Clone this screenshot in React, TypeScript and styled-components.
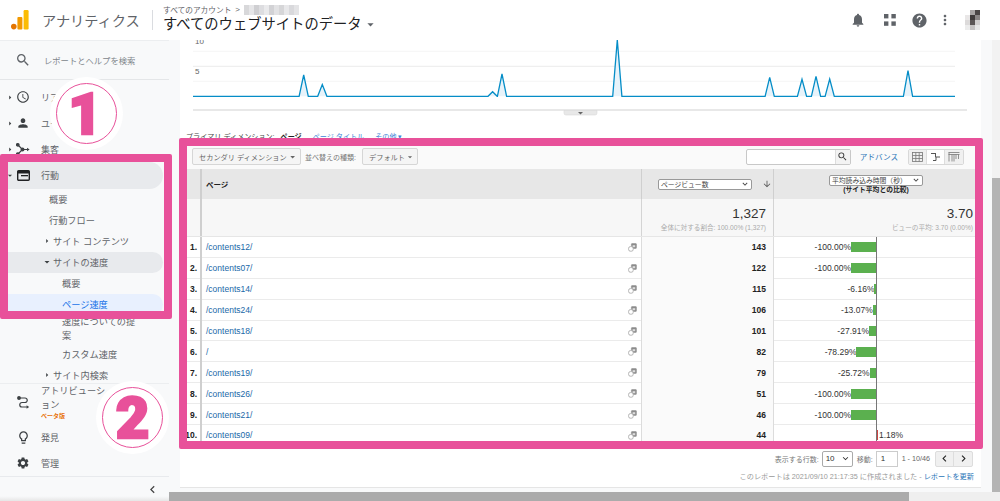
import React from 'react'
import styled, { createGlobalStyle } from 'styled-components'
import {
  MdSearch, MdAccessTime, MdPerson, MdLightbulbOutline, MdSettings, MdChevronLeft, MdChevronRight,
  MdNotifications, MdHelp, MdMoreVert, MdArrowDropDown, MdArrowRight, MdArrowDownward, MdKeyboardArrowDown,
} from 'react-icons/md'

const PINK = '#e8519a'
const BASE = 96.3

const peaks: [number, number][] = [
  [303.7, 75], [322.3, 84.6], [492.6, 91.7], [502, 74], [617.3, 40],
  [769.7, 77.3], [802, 79.3], [816, 76.3], [829.7, 79], [908, 70.7],
]

const rows = [
  { no: 1, page: '/contents12/', views: 143, diff: -100 },
  { no: 2, page: '/contents07/', views: 122, diff: -100 },
  { no: 3, page: '/contents14/', views: 115, diff: -6.16 },
  { no: 4, page: '/contents24/', views: 106, diff: -13.07 },
  { no: 5, page: '/contents18/', views: 101, diff: -27.91 },
  { no: 6, page: '/', views: 82, diff: -78.29 },
  { no: 7, page: '/contents19/', views: 79, diff: -25.72 },
  { no: 8, page: '/contents26/', views: 51, diff: -100 },
  { no: 9, page: '/contents21/', views: 46, diff: -100 },
  { no: 10, page: '/contents09/', views: 44, diff: 1.18 },
]

const Logo = () => (
  <svg width="18" height="20" viewBox="0 0 18 20">
    <circle cx="2.8" cy="16.6" r="2.8" fill="#e37400" />
    <rect x="6.4" y="7" width="5" height="12.4" rx="1" fill="#f29900" />
    <rect x="12.6" y="0" width="5" height="19.4" rx="1.2" fill="#fbbc04" />
  </svg>
)

const BlurredName = () => {
  const shades = ['#d8d8da', '#e6e6e8', '#cfcfd2', '#dddde0', '#eaeaec', '#d2d2d5', '#e2e2e4', '#d6d6d8', '#e8e8ea', '#d9d9dc', '#e4e4e6']
  return (
    <svg width="55" height="10" viewBox="0 0 55 10">
      {shades.map((c, i) => <rect key={i} x={i * 5} y="0" width="5" height="10" fill={c} />)}
    </svg>
  )
}

const Avatar = () => {
  const cells = [
    ['#ffffff', '#a8a4a4', '#4a4545'],
    ['#e9e7e7', '#3f3a3a', '#8a8585'],
    ['#dcdada', '#5a5555', '#d0cece'],
    ['#ececec', '#c4c2c2', '#e6e6e6'],
  ]
  return (
    <svg width="15" height="20" viewBox="0 0 15 20">
      {cells.map((r, y) => r.map((c, x) => <rect key={`${x}-${y}`} x={x * 5} y={y * 5} width="5" height="5" fill={c} />))}
    </svg>
  )
}

const AppsIcon = () => (
  <svg width="12" height="12" viewBox="0 0 12 12" fill="#5f6368">
    <rect x="0" y="0" width="4.4" height="4.4" /><rect x="7.4" y="0" width="4.4" height="4.4" />
    <rect x="0" y="7.4" width="4.4" height="4.4" /><rect x="7.4" y="7.4" width="4.4" height="4.4" />
  </svg>
)

const AcquisitionIcon = () => (
  <svg width="15" height="15" viewBox="0 0 15 15" fill="none" stroke="#3c4043" strokeWidth="1.2">
    <path d="M2 3 L6.5 7.5 L2 12 M6.5 7.5 H11" />
    <circle cx="1.8" cy="2.8" r="1.3" fill="#3c4043" />
    <circle cx="1.8" cy="12.2" r="1.3" fill="#3c4043" />
    <circle cx="6.5" cy="7.5" r="1.4" fill="#3c4043" />
    <path d="M11 5.8 L13.6 7.5 L11 9.2 Z" fill="#3c4043" stroke="none" />
  </svg>
)

const BehaviorIcon = () => (
  <svg width="13" height="11" viewBox="0 0 13 11">
    <rect x="0.7" y="0.7" width="11.6" height="9.6" rx="1" fill="none" stroke="#202124" strokeWidth="1.4" />
    <rect x="0.7" y="0.7" width="11.6" height="2.8" fill="#202124" />
    <rect x="4" y="5" width="7" height="1.3" fill="#202124" />
  </svg>
)

const AttributionIcon = () => (
  <svg width="13" height="13" viewBox="0 0 13 13" fill="none" stroke="#3c4043" strokeWidth="1.2">
    <circle cx="2" cy="2" r="1.3" fill="#3c4043" />
    <path d="M3 2 H8 a2 2 0 0 1 0 4.5 H5 a2 2 0 0 0 0 4.5 H10" />
    <path d="M9.6 9.2 L12.2 11 L9.6 12.8 Z" fill="#3c4043" stroke="none" />
  </svg>
)

const PopoutIcon = () => (
  <svg width="9" height="9" viewBox="0 0 9 9">
    <rect x="3.4" y="0.6" width="5" height="4.8" rx="0.6" fill="#8c8c8c" stroke="#999" strokeWidth="0.7" />
    <rect x="4.6" y="2.2" width="2.6" height="2" fill="#ddd" />
    <rect x="0.6" y="3.6" width="4.6" height="4.6" rx="1.8" fill="#fff" stroke="#aaa" strokeWidth="0.9" />
  </svg>
)

const TableViewIcon = () => (
  <svg width="11" height="10" viewBox="0 0 11 10" fill="none" stroke="#777" strokeWidth="0.8">
    <rect x="0.5" y="0.5" width="10" height="9" /><path d="M0.5 3.5H10.5M0.5 6.500H10.5M3.8 .5V9.5M7.2 .5V9.5" />
  </svg>
)

const CompareViewIcon = () => (
  <svg width="11" height="10" viewBox="0 0 11 10" fill="none" stroke="#555" strokeWidth="1">
    <path d="M1 1.5H6M5.5 1.5V5H10M3 8.5H6V5" />
  </svg>
)

const PivotViewIcon = () => (
  <svg width="12" height="10" viewBox="0 0 12 10" fill="none" stroke="#777" strokeWidth="0.8">
    <path d="M0.5 0.5H11.5M0.5 2.5H11.5M1 0.5V9.5M4 2.5V9.5M6 2.5V9.5M8 2.5V7M10.5 2.5V7" />
  </svg>
)

const TrafficChart = () => {
  const pts = [`193,${BASE}`]
  peaks.forEach(([x, y]) => pts.push(`${x - 4.6},${BASE}`, `${x},${y}`, `${x + 4.6},${BASE}`))
  pts.push(`955,${BASE}`)
  return (
    <svg width="801" height="85" viewBox="180 40 801 85">
      <path d="M193 51.3H955" stroke="#f5f5f5" />
      <path d="M193 66.3H955" stroke="#ececec" />
      <path d="M193 81.3H955" stroke="#f5f5f5" />
      <path d="M193 110H967" stroke="#e0e0e0" strokeWidth="1.4" />
      {peaks.map(([x, y]) => (
        <path key={x} d={`M${x - 4.6} ${BASE}L${x} ${y}L${x + 4.6} ${BASE}Z`} fill="#e8f3fa" />
      ))}
      <polyline points={pts.join(' ')} fill="none" stroke="#058dc7" strokeWidth="1.3" />
      <text x="195" y="44" fontSize="8" fill="#666" fontFamily="Liberation Sans">10</text>
      <text x="195" y="74" fontSize="8" fill="#666" fontFamily="Liberation Sans">5</text>
      <path d="M564 110.5H597V113a2 2 0 0 1 -2 2H566a2 2 0 0 1 -2 -2Z" fill="#e8e8e8" stroke="#d8d8d8" strokeWidth="0.6" />
      <path d="M578 112H583L580.500 114.500Z" fill="#666" />
    </svg>
  )
}

const App = () => {
  return (
    <Page>
      <GlobalStyle />
      <Header>
        <LogoBox><Logo /></LogoBox>
        <Product>アナリティクス</Product>
        <HeaderDivider />
        <Account>
          <Crumb>すべてのアカウント <CrumbArrow>&gt;</CrumbArrow> <BlurredName /></Crumb>
          <Property>すべてのウェブサイトのデータ<MdArrowDropDown size={15} color="#5f6368" /></Property>
        </Account>
        <HeaderIcons>
          <MdNotifications size={16} color="#5f6368" />
          <AppsIcon />
          <MdHelp size={17} color="#5f6368" />
          <MdMoreVert size={16} color="#5f6368" />
          <Avatar />
        </HeaderIcons>
      </Header>
      <Body>
        <Sidebar>
          <SearchRow>
            <MdSearch size={16} color="#5f6368" />
            <SearchHint>レポートとヘルプを検索</SearchHint>
          </SearchRow>
          <Nav>
            <NavItem $height={26} $top={4}>
              <Caret><MdArrowRight size={11} /></Caret>
              <NavIcon><MdAccessTime size={14} /></NavIcon>
              <NavLabel>リアルタイム</NavLabel>
            </NavItem>
            <NavItem $height={26}>
              <Caret><MdArrowRight size={11} /></Caret>
              <NavIcon><MdPerson size={14} /></NavIcon>
              <NavLabel>ユーザー</NavLabel>
            </NavItem>
            <NavItem $height={26}>
              <Caret><MdArrowRight size={11} /></Caret>
              <NavIcon><AcquisitionIcon /></NavIcon>
              <NavLabel>集客</NavLabel>
            </NavItem>
            <NavItem $height={27} $tone="open">
              <Caret><MdArrowDropDown size={13} /></Caret>
              <NavIcon><BehaviorIcon /></NavIcon>
              <NavLabel>行動</NavLabel>
            </NavItem>
            <SubItem $indent={49}>概要</SubItem>
            <SubItem $indent={49}>行動フロー</SubItem>
            <SubItem $indent={40}><Caret><MdArrowRight size={10} /></Caret>サイト コンテンツ</SubItem>
            <SubItem $indent={40} $tone="open"><Caret><MdArrowDropDown size={12} /></Caret>サイトの速度</SubItem>
            <SubItem $indent={62}>概要</SubItem>
            <SubItem $indent={62} $tone="active">ページ速度</SubItem>
            <WrappedItem>速度についての提案</WrappedItem>
            <SubItem $indent={62}>カスタム速度</SubItem>
            <SubItem $indent={40}><Caret><MdArrowRight size={10} /></Caret>サイト内検索</SubItem>
          </Nav>
          <SidebarBottom>
            <AttributionRow>
              <NavIcon><AttributionIcon /></NavIcon>
              <AttributionText>
                アトリビューション
                <Beta>ベータ版</Beta>
              </AttributionText>
            </AttributionRow>
            <NavItem $height={26} $top={3}>
              <Caret />
              <NavIcon><MdLightbulbOutline size={15} /></NavIcon>
              <NavLabel>発見</NavLabel>
            </NavItem>
            <NavItem $height={26}>
              <Caret />
              <NavIcon><MdSettings size={14} /></NavIcon>
              <NavLabel>管理</NavLabel>
            </NavItem>
            <CollapseRow><MdChevronLeft size={15} color="#444" /></CollapseRow>
          </SidebarBottom>
        </Sidebar>
        <Content>
          <Workspace>
            <Gutter>
              <Card>
                <TrafficChart />
                <PrimaryRow>
                  <span>プライマリ ディメンション:</span>
                  <strong>ページ</strong>
                  <DimLink>ページ タイトル</DimLink>
                  <DimLink>その他 ▾</DimLink>
                </PrimaryRow>
                <Table>
                  <Toolbar>
                    <ToolButton $width={109}>セカンダリ ディメンション<MdArrowDropDown size={12} /></ToolButton>
                    <ToolLabel>並べ替えの種類:</ToolLabel>
                    <ToolButton $width={56}>デフォルト<MdArrowDropDown size={12} /></ToolButton>
                    <ToolSpacer />
                    <FilterBox>
                      <FilterInput />
                      <FilterButton><MdSearch size={11} color="#333" /></FilterButton>
                    </FilterBox>
                    <AdvancedLink>アドバンス</AdvancedLink>
                    <ViewToggles>
                      <ViewToggle><TableViewIcon /></ViewToggle>
                      <ViewToggle $on><CompareViewIcon /></ViewToggle>
                      <ViewToggle><PivotViewIcon /></ViewToggle>
                    </ViewToggles>
                  </Toolbar>
                  <HeaderRow>
                    <HeaderCell $rule />
                    <HeaderCell $rule $grey><PageTitle>ページ</PageTitle></HeaderCell>
                    <HeaderCell $rule $center>
                      <MiniSelect $width={94}>ページビュー数<MdKeyboardArrowDown size={10} /></MiniSelect>
                      <SortArrow><MdArrowDownward size={10} color="#555" /></SortArrow>
                    </HeaderCell>
                    <CompareHead>
                      <MiniSelect $width={94}>平均読み込み時間（秒）<MdKeyboardArrowDown size={10} /></MiniSelect>
                      <CompareNote>(サイト平均との比較)</CompareNote>
                    </CompareHead>
                  </HeaderRow>
                  <SummaryRow>
                    <SummaryCell $rule />
                    <SummaryCell $rule />
                    <SummaryCell $rule>
                      <BigNum>1,327</BigNum>
                      <SubNum>全体に対する割合: 100.00% (1,327)</SubNum>
                    </SummaryCell>
                    <SummaryCell>
                      <BigNum>3.70</BigNum>
                      <SubNum>ビューの平均: 3.70 (0.00%)</SubNum>
                    </SummaryCell>
                  </SummaryRow>
                  {rows.map((r) => (
                    <Row key={r.no}>
                      <RowNo>{r.no}.</RowNo>
                      <RowPage>
                        <PageLink>{r.page}</PageLink>
                        <PopoutIcon />
                      </RowPage>
                      <RowViews>{r.views}</RowViews>
                      <RowCompare>
                        <NegativeSide>
                          {r.diff < 0 && <>{r.diff.toFixed(2)}%<Bar style={{ width: Math.abs(r.diff) * 0.25 }} /></>}
                        </NegativeSide>
                        <PositiveSide>
                          {r.diff > 0 && <><RedBar />{r.diff.toFixed(2)}%</>}
                        </PositiveSide>
                      </RowCompare>
                    </Row>
                  ))}
                </Table>
                <Pager>
                  <PagerText>表示する行数:</PagerText>
                  <PagerSelect>10<MdKeyboardArrowDown size={11} /></PagerSelect>
                  <PagerText>移動:</PagerText>
                  <PagerInput>1</PagerInput>
                  <PagerRange>1 - 10/46</PagerRange>
                  <PagerButtons>
                    <PagerButton><MdChevronLeft size={13} /></PagerButton>
                    <PagerButton><MdChevronRight size={13} /></PagerButton>
                  </PagerButtons>
                </Pager>
                <ReportNote>
                  このレポートは 2021/09/10 21:17:35 に作成されました - <ReportLink>レポートを更新</ReportLink>
                </ReportNote>
              </Card>
            </Gutter>
            <VScroll><VThumb /></VScroll>
          </Workspace>
          <HScroll><HThumb /></HScroll>
        </Content>
      </Body>

      <PinkFrame $x={0} $y={154} $w={172} $h={165} />
      <PinkFrame $x={179} $y={138} $w={804} $h={311} />
      <Badge $x={50} $y={77}><Ring><Digit $shift={-3}>1</Digit></Ring></Badge>
      <Badge $x={96} $y={381}><Ring><Digit>2</Digit></Ring></Badge>
    </Page>
  )
}

export default App

const GlobalStyle = createGlobalStyle`
html, body {
  margin: 0;
  padding: 0;
  overflow: hidden;
  background: #fff;
}
* {
  box-sizing: border-box;
}
`

const Page = styled.div`
position: relative;
width: 1000px;
height: 501px;
overflow: hidden;
display: flex;
flex-direction: column;
font-family: "Liberation Sans", "Noto Sans CJK JP", sans-serif;
color: #333;
background: #f8f9fa;
`

const Header = styled.header`
height: 40px;
flex: none;
display: flex;
align-items: center;
background: #fff;
padding-left: 11px;
`

const LogoBox = styled.div`
width: 31px;
height: 20px;
margin-top: -1px;
`

const Product = styled.div`
font-size: 14.2px;
color: #5f6368;
width: 110px;
white-space: nowrap;
`

const HeaderDivider = styled.div`
width: 1px;
height: 20px;
background: #dadce0;
margin-right: 10px;
`

const Account = styled.div`
display: flex;
flex-direction: column;
padding-bottom: 3px;
`

const Crumb = styled.div`
display: flex;
align-items: center;
gap: 4px;
height: 11px;
font-size: 7.7px;
color: #5f6368;
white-space: nowrap;
`

const CrumbArrow = styled.span`
font-size: 8px;
`

const Property = styled.div`
display: flex;
align-items: center;
gap: 1px;
font-size: 14.3px;
line-height: 18px;
color: #202124;
white-space: nowrap;
`

const HeaderIcons = styled.div`
margin-left: auto;
display: flex;
align-items: center;
padding-right: 20px;
& > svg:nth-child(1) { margin-right: 18px; }
& > svg:nth-child(2) { margin-right: 14.5px; }
& > svg:nth-child(3) { margin-right: 9.5px; }
& > svg:nth-child(4) { margin-right: 12px; }
`

const Body = styled.div`
flex: 1;
display: flex;
min-height: 0;
`

const Sidebar = styled.aside`
width: 169px;
flex: none;
display: flex;
flex-direction: column;
background: #f8f9fa;
border-top: 1px solid #eceef0;
`

const SearchRow = styled.div`
height: 39px;
flex: none;
display: flex;
align-items: center;
gap: 13px;
padding-left: 15px;
border-bottom: 1px solid #e4e6e8;
`

const SearchHint = styled.span`
font-size: 8.3px;
color: #80868b;
white-space: nowrap;
`

const Nav = styled.nav`
height: 303px;
flex: none;
overflow: hidden;
`

const NavItem = styled.div<{ $height: number; $top?: number; $tone?: string }>`
display: flex;
align-items: center;
height: ${(p) => p.$height}px;
margin-top: ${(p) => p.$top || 0}px;
padding-left: 5px;
width: 163px;
font-size: 9px;
color: #5f6368;
background: ${(p) => (p.$tone === 'open' ? '#e8eaed' : 'transparent')};
border-radius: 0 14px 14px 0;
`

const Caret = styled.span`
width: 10px;
flex: none;
display: inline-flex;
justify-content: center;
color: #3c4043;
`

const NavIcon = styled.span`
width: 16px;
flex: none;
display: inline-flex;
justify-content: center;
color: #3c4043;
`

const NavLabel = styled.span`
margin-left: 10px;
white-space: nowrap;
`

const SubItem = styled.div<{ $indent: number; $tone?: string }>`
display: flex;
align-items: center;
height: 21px;
width: 163px;
padding-left: ${(p) => p.$indent}px;
padding-bottom: 1px;
font-size: 9.2px;
white-space: nowrap;
color: ${(p) => (p.$tone === 'active' ? '#1a73e8' : '#5f6368')};
background: ${(p) => (p.$tone === 'active' ? '#e8f0fe' : p.$tone === 'open' ? '#e8eaed' : 'transparent')};
border-radius: 0 12px 12px 0;
& > span {
  width: 13px;
}
`

const WrappedItem = styled.div`
width: 78px;
margin-left: 62px;
font-size: 9.2px;
line-height: 14px;
height: 29px;
color: #5f6368;
`

const SidebarBottom = styled.div`
flex: 1;
display: flex;
flex-direction: column;
border-top: 1px solid #eceef0;
`

const AttributionRow = styled.div`
height: 37px;
flex: none;
display: flex;
align-items: center;
padding-left: 15px;
gap: 10px;
`

const AttributionText = styled.div`
width: 70px;
margin-top: -1px;
font-size: 9.2px;
line-height: 14px;
color: #5f6368;
`

const Beta = styled.div`
font-size: 6px;
line-height: 8px;
font-weight: 700;
color: #e8710a;
`

const CollapseRow = styled.div`
flex: 1;
display: flex;
align-items: center;
justify-content: flex-end;
padding-right: 9px;
border-top: 1px solid #e8eaed;
background: linear-gradient(#f8f9fa 80%, #e6e6e6);
`

const Content = styled.main`
flex: 1;
min-width: 0;
display: flex;
flex-direction: column;
`

const Workspace = styled.div`
flex: 1;
min-height: 0;
display: flex;
`

const Gutter = styled.div`
flex: 1;
min-width: 0;
padding: 0 11px 4px;
`

const Card = styled.div`
height: 100%;
background: #fff;
border-bottom: 1px solid #e5e5e5;
overflow: hidden;
& > svg {
  display: block;
}
`

const VScroll = styled.div`
width: 8px;
flex: none;
padding-top: 138px;
background: #f2f2f2;
`

const VThumb = styled.div`
height: 100%;
background: #b4b4b4;
`

const HScroll = styled.div`
height: 9px;
flex: none;
background: #efefef;
`

const HThumb = styled.div`
width: 740px;
height: 100%;
background: #ababab;
`

const PrimaryRow = styled.div`
height: 21px;
display: flex;
align-items: center;
gap: 6px;
padding: 0 0 0 6px;
font-size: 7.1px;
color: #444;
white-space: nowrap;
& strong {
  color: #222;
  margin-right: 5px;
}
`

const DimLink = styled.span`
color: #3f86d8;
margin-right: 5px;
`

const Table = styled.section`
margin: 0 5px 0 3px;
font-size: 8.5px;
`

const Toolbar = styled.div`
height: 23px;
display: flex;
align-items: center;
padding: 0 12px 2px 9px;
background: #fafafa;
`

const ToolButton = styled.div<{ $width: number }>`
width: ${(p) => p.$width}px;
height: 17px;
display: flex;
align-items: center;
justify-content: space-between;
padding: 0 2px 0 6px;
font-size: 7.2px;
color: #666;
white-space: nowrap;
background: #f5f5f5;
border: 1px solid #d6d6d6;
border-radius: 2px;
`

const ToolLabel = styled.span`
width: 61px;
padding-left: 4px;
font-size: 7px;
color: #777;
white-space: nowrap;
`

const ToolSpacer = styled.div`
flex: 1;
`

const FilterBox = styled.div`
width: 105px;
height: 16px;
display: flex;
border: 1px solid #c8c8c8;
border-radius: 2px;
background: #fff;
`

const FilterInput = styled.div`
flex: 1;
`

const FilterButton = styled.div`
width: 15px;
display: flex;
align-items: center;
justify-content: center;
background: #f3f3f3;
border-left: 1px solid #ddd;
`

const AdvancedLink = styled.span`
margin: 0 10px 0 9px;
font-size: 7.6px;
color: #2a75b8;
white-space: nowrap;
`

const ViewToggles = styled.div`
display: flex;
height: 16px;
border: 1px solid #d8d8d8;
border-radius: 2px;
`

const ViewToggle = styled.div<{ $on?: boolean }>`
width: 18px;
display: flex;
align-items: center;
justify-content: center;
background: ${(p) => (p.$on ? '#fff' : '#f0f0f0')};
border-right: 1px solid #ddd;
&:last-child {
  border-right: none;
}
`

const columns = '19px 440px 132px 1fr'

const HeaderRow = styled.div`
height: 30px;
display: grid;
grid-template-columns: ${columns};
background: #e7e7e7;
`

const HeaderCell = styled.div<{ $rule?: boolean; $grey?: boolean; $center?: boolean }>`
display: flex;
align-items: center;
justify-content: ${(p) => (p.$center ? 'flex-end' : 'flex-start')};
border-right: ${(p) => (p.$rule ? '1px solid #cfcfcf' : 'none')};
padding-right: ${(p) => (p.$center ? '1px' : '0')};
&:first-child {
  border-right: 2px solid #cfcfcf;
}
`

const PageTitle = styled.span`
padding-left: 4px;
font-size: 7.5px;
font-weight: 700;
color: #222;
`

const MiniSelect = styled.div<{ $width: number }>`
width: ${(p) => p.$width}px;
height: 11px;
display: flex;
align-items: center;
justify-content: space-between;
padding: 0 1px 0 2px;
font-size: 6.8px;
color: #444;
white-space: nowrap;
background: #fff;
border: 1px solid #999;
border-radius: 2px;
`

const SortArrow = styled.span`
display: inline-flex;
margin-left: 10px;
`

const CompareHead = styled.div`
display: flex;
flex-direction: column;
align-items: center;
justify-content: center;
padding-left: 8px;
padding-right: 6px;
`

const CompareNote = styled.div`
font-size: 6.8px;
line-height: 8px;
font-weight: 700;
color: #222;
`

const SummaryRow = styled.div`
height: 38px;
display: grid;
grid-template-columns: ${columns};
background: #f7f7f7;
border-bottom: 1px solid #e6e6e6;
`

const SummaryCell = styled.div<{ $rule?: boolean }>`
display: flex;
flex-direction: column;
align-items: flex-end;
padding: 7px 3px 0 0;
border-right: ${(p) => (p.$rule ? '1px solid #d4d4d4' : 'none')};
white-space: nowrap;
overflow: hidden;
&:first-child {
  border-right: 2px solid #cfcfcf;
}
&:nth-child(3) {
  padding-right: 7px;
}
`

const BigNum = styled.div`
font-size: 13.5px;
line-height: 15px;
color: #333;
`

const SubNum = styled.div`
margin-top: 2px;
font-size: 6.6px;
line-height: 9px;
color: #aaa;
`

const Row = styled.div`
height: 20.9px;
display: grid;
grid-template-columns: ${columns};
border-bottom: 1px solid #ebebeb;
background: #fff;
`

const RowNo = styled.div`
display: flex;
align-items: center;
justify-content: flex-end;
padding-right: 3px;
border-right: 2px solid #cfcfcf;
margin-bottom: -1px;
font-weight: 700;
color: #222;
`

const RowPage = styled.div`
display: flex;
align-items: center;
justify-content: space-between;
padding: 0 4px;
border-right: 1px solid #dcdcdc;
margin-bottom: -1px;
`

const PageLink = styled.span`
color: #1a68a8;
`

const RowViews = styled.div`
display: flex;
align-items: center;
justify-content: flex-end;
padding-right: 7px;
font-weight: 700;
color: #222;
background: #fafafa;
border-right: 1px solid #dcdcdc;
margin-bottom: -1px;
`

const RowCompare = styled.div`
display: grid;
grid-template-columns: 103px 1fr;
color: #333;
`

const NegativeSide = styled.div`
display: flex;
align-items: center;
justify-content: flex-end;
border-right: 1px solid #777;
margin-bottom: -1px;
`

const PositiveSide = styled.div`
display: flex;
align-items: center;
`

const Bar = styled.div`
height: 10px;
background: #5bb04f;
`

const RedBar = styled.div`
width: 1px;
height: 10px;
margin-right: 1px;
background: #c44;
`

const Pager = styled.div`
height: 18px;
margin: 4px 8px 0 0;
display: flex;
align-items: center;
justify-content: flex-end;
font-size: 7px;
color: #777;
white-space: nowrap;
`

const PagerText = styled.span`
margin-right: 3px;
`

const PagerSelect = styled.div`
width: 31px;
height: 16px;
margin-right: 4px;
display: flex;
align-items: center;
justify-content: space-between;
padding: 0 1px 0 3px;
font-size: 8px;
color: #333;
background: #fff;
border: 1px solid #aaa;
border-radius: 2px;
`

const PagerInput = styled.div`
width: 22px;
height: 16px;
display: flex;
align-items: center;
padding-left: 4px;
font-size: 8px;
color: #333;
background: #fff;
border: 1px solid #ccc;
`

const PagerRange = styled.span`
margin: 0 5px 0 4px;
font-size: 7.2px;
color: #666;
`

const PagerButtons = styled.div`
display: flex;
height: 16px;
border: 1px solid #ddd;
border-radius: 2px;
background: #f0f0f0;
`

const PagerButton = styled.div`
width: 18px;
display: flex;
align-items: center;
justify-content: center;
color: #222;
&:first-child {
  border-right: 1px solid #ddd;
}
`

const ReportNote = styled.div`
margin: 4px 7px 0 0;
text-align: right;
font-size: 7.2px;
line-height: 10px;
color: #999;
white-space: nowrap;
`

const ReportLink = styled.span`
color: #2a75b8;
`

const PinkFrame = styled.div<{ $x: number; $y: number; $w: number; $h: number }>`
position: absolute;
left: ${(p) => p.$x}px;
top: ${(p) => p.$y}px;
width: ${(p) => p.$w}px;
height: ${(p) => p.$h}px;
border: 8px solid ${PINK};
border-radius: 2px;
`

const Badge = styled.div<{ $x: number; $y: number }>`
position: absolute;
left: ${(p) => p.$x}px;
top: ${(p) => p.$y}px;
width: 73px;
height: 73px;
padding: 6px;
border-radius: 50%;
background: #fff;
`

const Ring = styled.div`
width: 100%;
height: 100%;
display: flex;
align-items: center;
justify-content: center;
border: 1.5px solid ${PINK};
border-radius: 50%;
`

const Digit = styled.span<{ $shift?: number }>`
font-family: Roboto, "Liberation Sans", sans-serif;
font-size: 58px;
line-height: 58px;
font-weight: 900;
color: ${PINK};
-webkit-text-stroke: 2.5px ${PINK};
margin-left: ${(p) => p.$shift || 0}px;
`
